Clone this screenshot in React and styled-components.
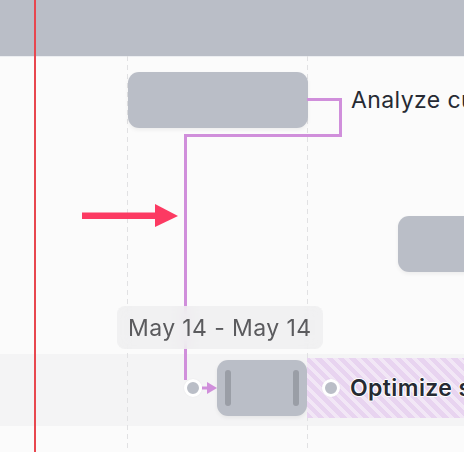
import React from 'react';
import styled, { createGlobalStyle } from 'styled-components';

const GlobalStyle = createGlobalStyle`
  html, body {
    margin: 0;
    padding: 0;
    background: #fbfbfb;
  }
  body {
    font-family: Inter, "Noto Sans", sans-serif;
  }
`;

const Chart = styled.div`
  position: relative;
  width: 464px;
  height: 452px;
  overflow: hidden;
  background: #fbfbfb;
`;

const Header = styled.div`
  height: 56px;
  background: #babec7;
  box-shadow: 0 1px 0 #eceef1;
`;

const Body = styled.div`
  position: relative;
  padding-top: 10px;
`;

const TodayLine = styled.div`
  position: absolute;
  top: 0;
  bottom: 0;
  left: 34px;
  width: 2px;
  background: #e8474f;
  z-index: 5;
`;

const GridLine = styled.div`
  position: absolute;
  top: 0;
  bottom: 0;
  left: ${(p) => p.$left}px;
  width: 1px;
  background: repeating-linear-gradient(to bottom, #e1e1e3 0 5px, transparent 5px 9px);
`;

const Row = styled.div`
  height: 72px;
  box-sizing: border-box;
  padding-bottom: 4px;
  display: flex;
  align-items: center;
  background: ${(p) => (p.$active ? '#f4f4f5' : 'transparent')};
`;

const Bar = styled.div`
  position: relative;
  flex-shrink: 0;
  margin-left: ${(p) => p.$offset || 0}px;
  width: ${(p) => p.$width}px;
  height: 56px;
  box-sizing: border-box;
  border-radius: 11px;
  background: #babec7;
  box-shadow: 0 2px 4px rgba(0, 0, 0, 0.06);
  display: flex;
  align-items: center;
  justify-content: space-between;
  padding: 0 8px;
`;

const Handle = styled.span`
  width: 6px;
  height: 36px;
  border-radius: 3px;
  background: #9a9ea6;
`;

const Dot = styled.span`
  position: relative;
  z-index: 3;
  flex-shrink: 0;
  margin-left: ${(p) => p.$offset || 0}px;
  width: 12px;
  height: 12px;
  border-radius: 50%;
  background: #babec7;
  border: 3.5px solid #ffffff;
  box-shadow: 0 0 2px rgba(0, 0, 0, 0.06);
  visibility: ${(p) => (p.$hidden ? 'hidden' : 'visible')};
`;

const Extension = styled.div`
  position: relative;
  flex: 1;
  height: 60px;
  display: flex;
  align-items: center;
  gap: 10px;
  padding-left: 15px;
  background: ${(p) =>
    p.$striped
      ? 'repeating-linear-gradient(45deg, #e8d4f0 0 4.5px, #f2e7f6 4.5px 8px)'
      : 'transparent'};
`;

const Label = styled.span`
  font-size: 23px;
  letter-spacing: 0.4px;
  line-height: 1;
  white-space: nowrap;
  color: #262a33;
  font-weight: ${(p) => (p.$strong ? 600 : 400)};
  text-shadow: ${(p) =>
    p.$strong
      ? '0 0 2px #fff, 1px 0 0 #fff, -1px 0 0 #fff, 0 1px 0 #fff, 0 -1px 0 #fff'
      : 'none'};
`;

const Overlay = styled.svg`
  position: absolute;
  top: 0;
  left: 0;
  pointer-events: none;
  z-index: ${(p) => p.$z || 1};
`;

const Tooltip = styled.div`
  position: absolute;
  z-index: 4;
  left: 117px;
  top: 250px;
  height: 43px;
  box-sizing: border-box;
  padding: 0 12px 0 11px;
  display: flex;
  align-items: center;
  border-radius: 8px;
  background: rgba(238, 238, 239, 0.82);
  backdrop-filter: blur(6px);
  font-size: 23px;
  letter-spacing: 0.4px;
  color: #5b5b5e;
  white-space: nowrap;
`;

const LinkArrow = () => (
  <svg width="15" height="14" viewBox="0 0 15 14" style={{ flexShrink: 0 }}>
    <rect x="0" y="5.5" width="6" height="3" fill="#d08fdb" />
    <polygon points="5,1 15,7 5,13" fill="#d08fdb" />
  </svg>
);

export default function App() {
  return (
    <>
      <GlobalStyle />
      <Chart>
        <TodayLine />
        <Header />
        <Body>
          <GridLine $left={127} />
          <GridLine $left={307} />

          <Row>
            <Bar $offset={128} $width={180} />
            <Extension>
              <Dot $hidden />
              <Label>Analyze customer feedback</Label>
            </Extension>
          </Row>
          <Row />
          <Row>
            <Bar $offset={398} $width={220} />
          </Row>
          <Row />
          <Row $active>
            <Dot $offset={184} />
            <LinkArrow />
            <Bar $width={90}>
              <Handle />
              <Handle />
            </Bar>
            <Extension $striped>
              <Dot />
              <Label $strong>Optimize search results</Label>
            </Extension>
          </Row>
          <Row />

          <Overlay width="464" height="400" viewBox="0 56 464 400">
            <path
              d="M307 99.5 H340.5 V135.5 H185.5 V380"
              fill="none"
              stroke="#d08fdb"
              strokeWidth="3"
              strokeLinejoin="miter"
            />
          </Overlay>

          <Overlay width="464" height="400" viewBox="0 56 464 400" $z={6}>
            <rect x="82" y="212.5" width="74" height="6.5" fill="#fc3a62" />
            <polygon points="155,204 178,216 155,227" fill="#fc3a62" />
          </Overlay>

          <Tooltip>May 14 - May 14</Tooltip>
        </Body>
      </Chart>
    </>
  );
}
